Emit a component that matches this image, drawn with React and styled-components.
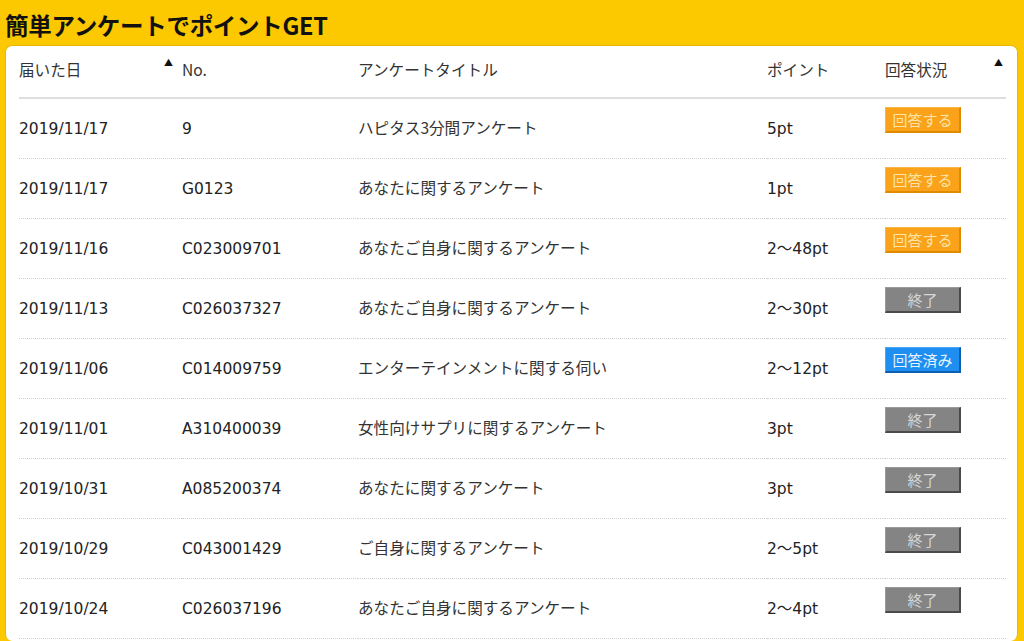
import React from "react";
import styled, { createGlobalStyle } from "styled-components";

const Global = createGlobalStyle`
  html, body { margin: 0; padding: 0; background: #fcc800; }
  body { font-family: "DejaVu Sans", "Noto Sans CJK JP", sans-serif; color: #222; }
`;

const Page = styled.div`
  background: #fcc800;
  padding: 0 6px 0 5px;
  height: 641px;
  overflow: hidden;
  display: flex;
  flex-direction: column;
`;

const Title = styled.h1`
  margin: 0;
  padding: 11px 0 0 0;
  height: 45px;
  flex: none;
  box-sizing: border-box;
  font-family: "Noto Sans CJK JP", sans-serif;
  font-weight: 700;
  font-size: 23.5px;
  line-height: 28px;
  color: #111;
  letter-spacing: -0.3px;
  white-space: nowrap;
`;

const Card = styled.div`
  background: #fff;
  border-radius: 7px;
  padding: 0 11px 0 13px;
  flex: 1;
  border: 1px solid #e8b800;
  border-bottom: none;
`;

const Grid = styled.div`
  display: grid;
  grid-template-columns: 163px 176px 409px 118px 1fr;
`;

const Row = styled.div`
  display: contents;
`;

const HeadCell = styled.div`
  height: 53px;
  border-bottom: 2px solid #dedede;
  font-family: "Noto Sans CJK JP", sans-serif;
  font-size: 15.6px;
  color: #333;
  display: flex;
  justify-content: space-between;
  align-items: flex-start;
  padding-top: 13px;
  box-sizing: border-box;
  line-height: 20px;
  white-space: nowrap;
`;

const Arrow = styled.span`
  font-size: 9px;
  color: #111;
  line-height: 10px;
  margin-top: -1px;
  margin-right: ${(p) => p.$mr || 6}px;
`;

const Cell = styled.div`
  height: 60px;
  box-sizing: border-box;
  border-bottom: 1px dotted #cfcfcf;
  display: flex;
  align-items: flex-start;
  padding-top: ${(p) => (p.$jp ? "18px" : "20px")};
  line-height: 20px;
  color: ${(p) => (p.$jp ? "#333" : "#222")};
  white-space: nowrap;
  font-family: ${(p) =>
    p.$jp ? `"Noto Sans CJK JP", sans-serif` : `"DejaVu Sans", "Noto Sans CJK JP", sans-serif`};
  font-size: ${(p) => (p.$jp ? "15.6px" : "15.5px")};
`;

const BtnCell = styled(Cell)`
  padding-top: 8px;
`;

const variants = {
  answer: { bg: "#f9a21a", fg: "#fde4a6", light: "#fbb64a", dark: "#e08a00" },
  done: { bg: "#848484", fg: "#d6d6d6", light: "#9a9a9a", dark: "#4a4a4a" },
  answered: { bg: "#1e8ff0", fg: "#e6f2ff", light: "#49a8f7", dark: "#0d5fb0" },
};

const Button = styled.span`
  display: inline-flex;
  align-items: center;
  justify-content: center;
  width: 76px;
  height: 26px;
  box-sizing: border-box;
  font-family: "Noto Sans CJK JP", sans-serif;
  font-size: 15px;
  background: ${(p) => variants[p.$v].bg};
  color: ${(p) => variants[p.$v].fg};
  border-top: 1px solid ${(p) => variants[p.$v].light};
  border-left: 1px solid ${(p) => variants[p.$v].light};
  border-right: 2px solid ${(p) => variants[p.$v].dark};
  border-bottom: 2px solid ${(p) => variants[p.$v].dark};
`;

const labels = { answer: "回答する", done: "終了", answered: "回答済み" };

const rows = [
  ["2019/11/17", "9", "ハピタス3分間アンケート", "5pt", "answer"],
  ["2019/11/17", "G0123", "あなたに関するアンケート", "1pt", "answer"],
  ["2019/11/16", "C023009701", "あなたご自身に関するアンケート", "2～48pt", "answer"],
  ["2019/11/13", "C026037327", "あなたご自身に関するアンケート", "2～30pt", "done"],
  ["2019/11/06", "C014009759", "エンターテインメントに関する伺い", "2～12pt", "answered"],
  ["2019/11/01", "A310400039", "女性向けサプリに関するアンケート", "3pt", "done"],
  ["2019/10/31", "A085200374", "あなたに関するアンケート", "3pt", "done"],
  ["2019/10/29", "C043001429", "ご自身に関するアンケート", "2～5pt", "done"],
  ["2019/10/24", "C026037196", "あなたご自身に関するアンケート", "2～4pt", "done"],
];

export default function App() {
  return (
    <>
      <Global />
      <Page>
        <Title>簡単アンケートでポイントGET</Title>
        <Card>
          <Grid>
            <Row>
              <HeadCell>
                <span>届いた日</span>
                <Arrow $mr={9}>▲</Arrow>
              </HeadCell>
              <HeadCell>No.</HeadCell>
              <HeadCell>アンケートタイトル</HeadCell>
              <HeadCell>ポイント</HeadCell>
              <HeadCell>
                <span>回答状況</span>
                <Arrow $mr={3}>▲</Arrow>
              </HeadCell>
            </Row>
            {rows.map((r, i) => (
              <Row key={i}>
                <Cell>{r[0]}</Cell>
                <Cell>{r[1]}</Cell>
                <Cell $jp>{r[2]}</Cell>
                <Cell>{r[3]}</Cell>
                <BtnCell>
                  <Button $v={r[4]}>{labels[r[4]]}</Button>
                </BtnCell>
              </Row>
            ))}
          </Grid>
        </Card>
      </Page>
    </>
  );
}
